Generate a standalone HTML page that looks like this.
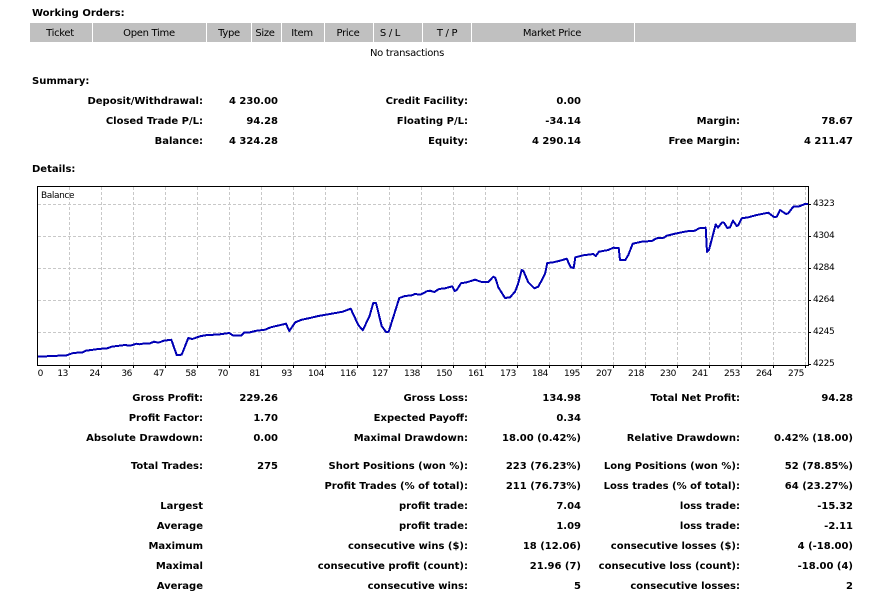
<!DOCTYPE html>
<html><head><meta charset="utf-8">
<style>
html,body{margin:0;padding:0;background:#fff;width:889px;height:596px;overflow:hidden}
body{position:relative;font-family:"DejaVu Sans",sans-serif;font-size:10px;color:#000}
.t,.h{position:absolute;line-height:14px;white-space:nowrap}
.t{font-weight:bold;margin-top:1px}
.h{width:120px;text-align:center;top:27px;font-size:10px;letter-spacing:-.3px}
.a{right:686px}.b{right:611px}.c{right:421px}.d{right:308px}.e{right:149px}.f{right:36px}
.bar{position:absolute;left:30px;top:23px;width:826px;height:19px;background:#c0c0c0}
.sep{position:absolute;top:23px;width:1px;height:19px;background:#fff}
svg{position:absolute;left:0;top:0}
svg text{font-family:"DejaVu Sans",sans-serif;font-size:9px;letter-spacing:-.4px;fill:#000}
</style></head><body>
<div class="t" style="left:32px;top:6px">Working Orders:</div>
<div class="bar"></div>
<div class="sep" style="left:92px"></div><div class="sep" style="left:206px"></div><div class="sep" style="left:251px"></div><div class="sep" style="left:281px"></div><div class="sep" style="left:324px"></div><div class="sep" style="left:373px"></div><div class="sep" style="left:422px"></div><div class="sep" style="left:471px"></div><div class="sep" style="left:634px"></div>
<div class="h" style="left:0px">Ticket</div>
<div class="h" style="left:89px">Open Time</div>
<div class="h" style="left:169px">Type</div>
<div class="h" style="left:205px">Size</div>
<div class="h" style="left:242px">Item</div>
<div class="h" style="left:288px">Price</div>
<div class="h" style="left:330px">S / L</div>
<div class="h" style="left:387px">T / P</div>
<div class="h" style="left:492px">Market Price</div>
<div class="h" style="left:347px;top:47px">No transactions</div>

<div class="t" style="left:32px;top:74px">Summary:</div>
<div class="t a" style="top:94px">Deposit/Withdrawal:</div><div class="t b" style="top:94px">4 230.00</div><div class="t c" style="top:94px">Credit Facility:</div><div class="t d" style="top:94px">0.00</div>
<div class="t a" style="top:114px">Closed Trade P/L:</div><div class="t b" style="top:114px">94.28</div><div class="t c" style="top:114px">Floating P/L:</div><div class="t d" style="top:114px">-34.14</div><div class="t e" style="top:114px">Margin:</div><div class="t f" style="top:114px">78.67</div>
<div class="t a" style="top:134px">Balance:</div><div class="t b" style="top:134px">4 324.28</div><div class="t c" style="top:134px">Equity:</div><div class="t d" style="top:134px">4 290.14</div><div class="t e" style="top:134px">Free Margin:</div><div class="t f" style="top:134px">4 211.47</div>
<div class="t" style="left:32px;top:162px">Details:</div>

<svg width="889" height="596" viewBox="0 0 889 596">
<g stroke="#c8c8c8" stroke-width="1" stroke-dasharray="3 2" fill="none" shape-rendering="crispEdges">
<path d="M38 204.5H808M38 236.5H808M38 268.5H808M38 300.5H808M38 332.5H808"/>
<path d="M69.5 187V365M101.5 187V365M133.5 187V365M165.5 187V365M197.5 187V365M229.5 187V365M261.5 187V365M293.5 187V365M325.5 187V365M357.5 187V365M389.5 187V365M421.5 187V365M453.5 187V365M485.5 187V365M517.5 187V365M549.5 187V365M581.5 187V365M613.5 187V365M645.5 187V365M677.5 187V365M709.5 187V365M741.5 187V365M773.5 187V365M805.5 187V365"/>
</g>
<rect x="37.5" y="186.5" width="771" height="179" fill="none" stroke="#000" shape-rendering="crispEdges"/>
<path stroke="#000" fill="none" shape-rendering="crispEdges" d="M69.5 365V368M101.5 365V368M133.5 365V368M165.5 365V368M197.5 365V368M229.5 365V368M261.5 365V368M293.5 365V368M325.5 365V368M357.5 365V368M389.5 365V368M421.5 365V368M453.5 365V368M485.5 365V368M517.5 365V368M549.5 365V368M581.5 365V368M613.5 365V368M645.5 365V368M677.5 365V368M709.5 365V368M741.5 365V368M773.5 365V368M805.5 365V368M808 204.5H811M808 236.5H811M808 268.5H811M808 300.5H811M808 332.5H811M808 364.5H811"/>
<path fill="none" stroke="#0000b4" stroke-width="2" stroke-linejoin="round" shape-rendering="crispEdges" d="M38 356.7L66.7 355.3L69.3 354.3L73.3 353L82.7 352.3L86 350.7L98.3 349L107.3 348.3L111.7 346.7L125 345L130 345.7L136.7 343.7L139.3 344.3L142.7 343.7L150 343.3L154 341.7L158.3 342.7L164 340.7L171.3 339.7L176.7 355L181.7 354.7L188.3 338L192.3 339L200 336.3L205 335.3L220 334.3L229.3 333L233.3 335.7L241.3 335.7L244 332.7L250 332.3L256.7 330.7L265 329.7L270.7 327.3L286 323.7L289.3 331L295.3 322.3L301.7 319.7L310 318L318.3 316L328.3 314.3L342.7 311.7L350.7 308.7L358.3 325L362.7 330.3L369.3 316.7L373.3 303L376 303L381.7 326L386 332L388.7 331.7L399.3 298L405 296L411.7 295.3L415 294L420.7 294.7L426.7 291.3L430 290.7L434.3 292L439 289L445 288.3L452.3 286.3L454.7 291L456.7 290L461 283.3L466.7 282.3L475 279.7L481.7 282L488.3 282L493.3 276.7L495.3 277.7L498.3 287.3L505 298L510 297.3L515 291.7L518 284L521.7 270L523.3 270.7L528.3 282.3L534.3 288.3L538.3 286.7L545 274L547.3 263L553.3 262.3L560 260.7L566.7 258.7L570.7 267.3L573.7 268L575.3 257.3L583.3 255.3L593.3 254L595.7 256L599 251.7L608.3 250L613.3 247.7L618.7 248L620 260L625.3 260L628.3 255L632.7 243.7L641.7 241.7L651.7 241L656.7 238.3L664 237.7L666.7 235.7L675 233.7L686.7 231.3L695 230.7L699 228.3L705.7 227.7L707 252L709 250L715.7 224.3L718 227.7L721.7 222.7L724 222.7L727.3 228L730 227.3L733 220.7L736.7 226L738.3 225.3L741.7 218.3L748.3 217.3L756.7 215L768.3 212.7L774 217L776.7 216.7L780 210L786 214L788.3 213.3L793.3 206.7L798.3 206.7L805 204L808 204"/>
<text x="41" y="198">Balance</text>
<g text-anchor="start"><text x="813" y="206">4323</text><text x="813" y="238">4304</text><text x="813" y="270">4284</text><text x="813" y="302">4264</text><text x="813" y="334">4245</text><text x="813" y="366">4225</text></g>
<g text-anchor="end"><text x="43" y="376">0</text><text x="68" y="376">13</text><text x="100" y="376">24</text><text x="132" y="376">36</text><text x="164" y="376">47</text><text x="196" y="376">58</text><text x="228" y="376">70</text><text x="260" y="376">81</text><text x="292" y="376">93</text><text x="324" y="376">104</text><text x="356" y="376">116</text><text x="388" y="376">127</text><text x="420" y="376">138</text><text x="452" y="376">150</text><text x="484" y="376">161</text><text x="516" y="376">173</text><text x="548" y="376">184</text><text x="580" y="376">195</text><text x="612" y="376">207</text><text x="644" y="376">218</text><text x="676" y="376">230</text><text x="708" y="376">241</text><text x="740" y="376">253</text><text x="772" y="376">264</text><text x="804" y="376">275</text></g>
</svg>

<div class="t a" style="top:391px">Gross Profit:</div><div class="t b" style="top:391px">229.26</div><div class="t c" style="top:391px">Gross Loss:</div><div class="t d" style="top:391px">134.98</div><div class="t e" style="top:391px">Total Net Profit:</div><div class="t f" style="top:391px">94.28</div>
<div class="t a" style="top:411px">Profit Factor:</div><div class="t b" style="top:411px">1.70</div><div class="t c" style="top:411px">Expected Payoff:</div><div class="t d" style="top:411px">0.34</div>
<div class="t a" style="top:431px">Absolute Drawdown:</div><div class="t b" style="top:431px">0.00</div><div class="t c" style="top:431px">Maximal Drawdown:</div><div class="t d" style="top:431px">18.00 (0.42%)</div><div class="t e" style="top:431px">Relative Drawdown:</div><div class="t f" style="top:431px">0.42% (18.00)</div>
<div class="t a" style="top:459px">Total Trades:</div><div class="t b" style="top:459px">275</div><div class="t c" style="top:459px">Short Positions (won %):</div><div class="t d" style="top:459px">223 (76.23%)</div><div class="t e" style="top:459px">Long Positions (won %):</div><div class="t f" style="top:459px">52 (78.85%)</div>
<div class="t c" style="top:479px">Profit Trades (% of total):</div><div class="t d" style="top:479px">211 (76.73%)</div><div class="t e" style="top:479px">Loss trades (% of total):</div><div class="t f" style="top:479px">64 (23.27%)</div>
<div class="t a" style="top:499px">Largest</div><div class="t c" style="top:499px">profit trade:</div><div class="t d" style="top:499px">7.04</div><div class="t e" style="top:499px">loss trade:</div><div class="t f" style="top:499px">-15.32</div>
<div class="t a" style="top:519px">Average</div><div class="t c" style="top:519px">profit trade:</div><div class="t d" style="top:519px">1.09</div><div class="t e" style="top:519px">loss trade:</div><div class="t f" style="top:519px">-2.11</div>
<div class="t a" style="top:539px">Maximum</div><div class="t c" style="top:539px">consecutive wins ($):</div><div class="t d" style="top:539px">18 (12.06)</div><div class="t e" style="top:539px">consecutive losses ($):</div><div class="t f" style="top:539px">4 (-18.00)</div>
<div class="t a" style="top:559px">Maximal</div><div class="t c" style="top:559px">consecutive profit (count):</div><div class="t d" style="top:559px">21.96 (7)</div><div class="t e" style="top:559px">consecutive loss (count):</div><div class="t f" style="top:559px">-18.00 (4)</div>
<div class="t a" style="top:579px">Average</div><div class="t c" style="top:579px">consecutive wins:</div><div class="t d" style="top:579px">5</div><div class="t e" style="top:579px">consecutive losses:</div><div class="t f" style="top:579px">2</div>
</body></html>
